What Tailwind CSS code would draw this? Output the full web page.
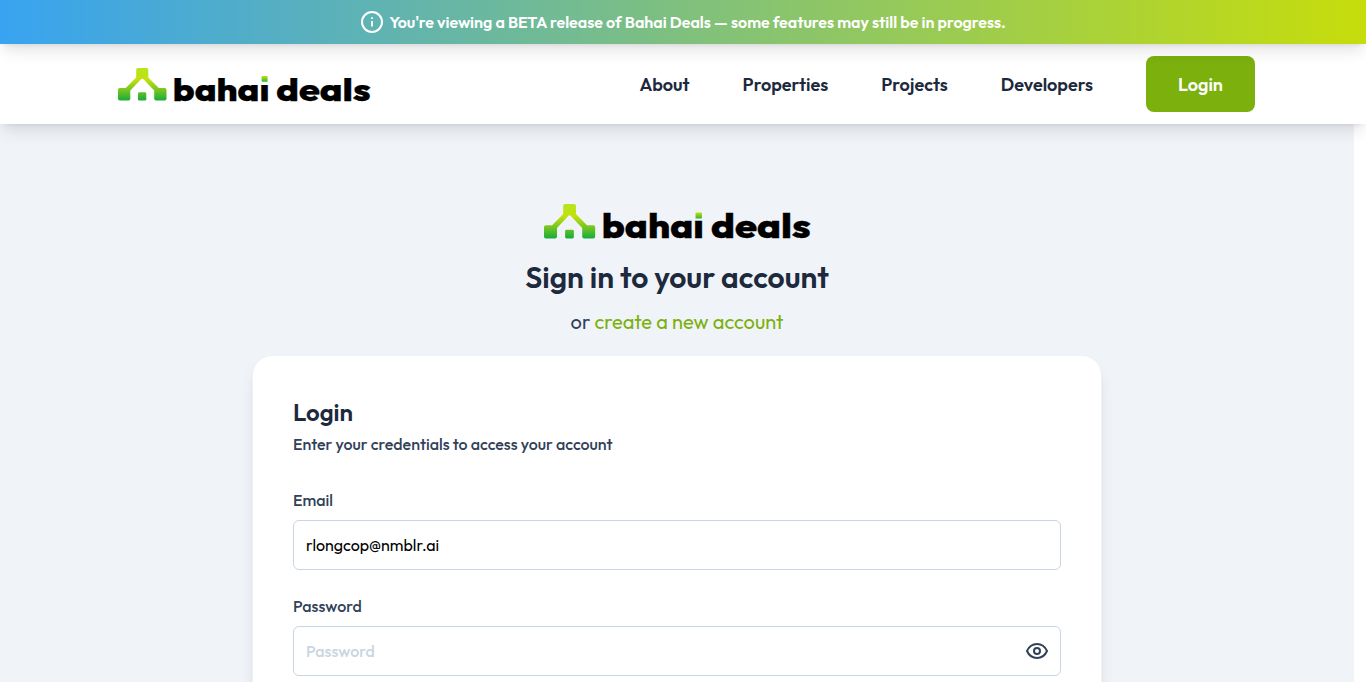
<!DOCTYPE html>
<html lang="en">
<head>
<meta charset="utf-8">
<title>Bahai Deals</title>
<script src="https://cdn.jsdelivr.net/npm/@tailwindcss/browser@4"></script>
</head>
<body class="h-[682px] overflow-hidden bg-white font-[Outfit,Lato,sans-serif]">
<svg class="absolute h-0 w-0" aria-hidden="true">
  <defs>
    <linearGradient id="leaf" gradientUnits="userSpaceOnUse" x1="0" y1="0" x2="0" y2="33">
      <stop offset="0" stop-color="#b5e61d"/><stop offset=".35" stop-color="#c4e00d"/><stop offset=".7" stop-color="#6cc224"/><stop offset="1" stop-color="#12ab3c"/>
    </linearGradient>
    <linearGradient id="dot" x1="0" y1="0" x2="0" y2="1">
      <stop offset="0" stop-color="#c4e00d"/><stop offset="1" stop-color="#2fb535"/>
    </linearGradient>
    <symbol id="logo" viewBox="0 0 253 34">
      <path fill="url(#leaf)" d="M20 0H28.500Q30.300 0 30.300 1.800V9.500L40.800 20H46.700Q48.500 20 48.500 21.800V30.800Q48.500 32.600 46.700 32.600H38Q36.200 32.600 36.200 30.800V22.600L25.500 11.300Q24.300 10.100 23 11.300L12.300 22.600V30.800Q12.300 32.600 10.500 32.600H1.800Q0 32.600 0 30.800V21.800Q0 20 1.800 20H7.700L18.200 9.500V1.800Q18.200 0 20 0Z"/>
      <rect fill="url(#leaf)" x="20" y="24.300" width="8.300" height="8.300" rx="1.400"/>
      <g font-family="Outfit, Lato, sans-serif" font-weight="800" font-size="32.500" stroke="#000" stroke-width=".25">
        <text x="54.800" y="32.500" textLength="96.600" lengthAdjust="spacingAndGlyphs">baha&#305;</text>
        <text x="158.300" y="32.500" textLength="94.400" lengthAdjust="spacingAndGlyphs">deals</text>
      </g>
      <rect fill="url(#dot)" x="143.600" y="8" width="6" height="5.700" rx=".6"/>
    </symbol>
  </defs>
</svg>

<div class="relative z-20 flex h-11 items-center justify-center gap-1.5 bg-linear-to-r/srgb from-[#38a3f1] to-[#c6dd0b] pl-px text-white shadow-[0_10px_15px_-3px_rgba(0,0,0,0.1),0_4px_6px_-4px_rgba(0,0,0,0.1)]">
  <svg class="size-[22px]" viewBox="0 0 22 22" fill="none" stroke="currentColor" stroke-width="2"><circle cx="11" cy="11" r="10"/><path stroke-width="1.800" d="M11 10v5.500M11 6.200v1.900"/></svg>
  <p class="text-base font-semibold">You're viewing a BETA release of Bahai Deals — some features may still be in progress.</p>
</div>

<header class="relative z-10 flex h-20 items-center justify-between bg-white pr-[111px] pl-[118px] shadow-[0_10px_15px_-3px_rgba(0,0,0,0.1),0_4px_6px_-4px_rgba(0,0,0,0.1)]">
  <svg class="mt-0.5 h-[34px] w-[253px]"><use href="#logo"/></svg>
  <nav class="flex items-center gap-[53px] text-lg font-semibold text-slate-800">
    <a class="pt-0.5">About</a><a class="pt-0.5">Properties</a><a class="pt-0.5">Projects</a><a class="pt-0.5">Developers</a>
    <a class="flex h-14 items-center rounded-lg bg-[#7bb00d] px-8 pt-0.5 text-white">Login</a>
  </nav>
</header>

<main class="mr-3 flex h-[558px] flex-col items-center overflow-hidden bg-[#f0f4f9] pt-20">
  <svg class="h-[36px] w-[267px] shrink-0"><use href="#logo"/></svg>
  <h1 class="mt-[19px] text-3xl font-semibold text-slate-800">Sign in to your account</h1>
  <p class="mt-[13px] text-xl text-slate-700">or <a class="text-[#7bb00d]">create a new account</a></p>
  <section class="mt-[19px] h-[500px] w-[850px] shrink-0 rounded-[20px] border border-slate-200/60 bg-white px-10 pt-10 shadow-[0_10px_15px_-3px_rgba(0,0,0,0.1),0_4px_6px_-4px_rgba(0,0,0,0.1)]">
    <h2 class="text-2xl font-semibold text-slate-800">Login</h2>
    <p class="mt-1 text-base font-medium text-slate-700">Enter your credentials to access your account</p>
    <label class="mt-8 block text-base font-medium text-slate-700">Email</label>
    <div class="mt-2 flex h-[50px] items-center rounded-md border border-slate-300 px-3 text-black">rlongcop@nmblr.ai</div>
    <label class="mt-6 block text-base font-medium text-slate-700">Password</label>
    <div class="mt-2 flex h-[50px] items-center justify-between rounded-md border border-slate-300 px-3 font-medium text-slate-300">Password
      <svg class="h-4 w-[22px] text-slate-700" viewBox="0 0 22 16" fill="none" stroke="currentColor" stroke-width="2"><path d="M1 8C3 3.500 6.500 1 11 1s8 2.500 10 7c-2 4.500-5.500 7-10 7S3 12.500 1 8Z"/><circle cx="11" cy="8" r="3"/></svg>
    </div>
  </section>
</main>
</body>
</html>
